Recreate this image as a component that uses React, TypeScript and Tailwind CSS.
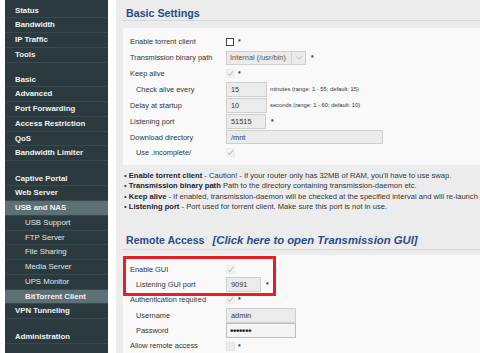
import React from "react";

type Item = { t: string; sub?: boolean; active?: boolean; spacer?: number };

const items: Item[] = [
  { t: "Status" },
  { t: "Bandwidth" },
  { t: "IP Traffic" },
  { t: "Tools" },
  { t: "", spacer: 10 },
  { t: "Basic" },
  { t: "Advanced" },
  { t: "Port Forwarding" },
  { t: "Access Restriction" },
  { t: "QoS" },
  { t: "Bandwidth Limiter" },
  { t: "", spacer: 10.5 },
  { t: "Captive Portal" },
  { t: "Web Server" },
  { t: "USB and NAS", active: true },
  { t: "USB Support", sub: true },
  { t: "FTP Server", sub: true },
  { t: "File Sharing", sub: true },
  { t: "Media Server", sub: true },
  { t: "UPS Monitor", sub: true },
  { t: "BitTorrent Client", sub: true, active: true },
  { t: "VPN Tunneling" },
  { t: "", spacer: 10.5 },
  { t: "Administration" },
];

const font = { fontFamily: '"Liberation Sans", Arial, sans-serif' };

function Check({ checked, enabled, empty }: { checked?: boolean; enabled?: boolean; empty?: boolean }) {
  if (enabled) {
    return <div className="w-[8px] h-[8px] border border-[#444] bg-white" />;
  }
  if (empty) {
    return <div className="w-[9px] h-[9px] border border-[#e2e2e2] bg-[#ececec]" />;
  }
  return (
    <svg width="9" height="9" viewBox="0 0 9 9">
      <rect x="0.5" y="0.5" width="8" height="8" fill="#f4f4f4" stroke="#ececec" />
      {checked && <path d="M1.8 4.6 L3.6 6.4 L7.2 2.2" fill="none" stroke="#c4c4c4" strokeWidth="1.2" />}
    </svg>
  );
}

function Star({ ml = "ml-[4px]" }: { ml?: string }) {
  return <span className={`${ml} text-[7px] text-[#333] font-bold leading-none`}>*</span>;
}

function Row({ label, indent, h, children }: { label: string; indent?: boolean; h: string; children?: React.ReactNode }) {
  return (
    <div className={`flex items-center ${h}`}>
      <div className={`${indent ? "pl-[13px]" : "pl-[7px]"} w-[103px] shrink-0 text-[7.4px] text-[#333] whitespace-nowrap`}>{label}</div>
      <div className="flex items-center">{children}</div>
    </div>
  );
}

function Input({ w, v, h = "h-[15px]" }: { w: string; v: string; h?: string }) {
  return (
    <div className={`${w} ${h} border border-[#cfcfcf] bg-[#ebebeb] flex items-center pl-[4px] text-[7.4px] text-[#333]`}>
      {v}
    </div>
  );
}

function Hint({ t }: { t: string }) {
  return <span className="ml-[3px] text-[5.8px] text-[#333] whitespace-nowrap">{t}</span>;
}

export default function App() {
  const h1 = "h-[15.86px]";
  const h2 = "h-[15.4px]";
  return (
    <div className="w-[480px] h-[353px] overflow-hidden bg-white flex" style={font}>
      {/* Sidebar */}
      <div className="ml-[5px] w-[103px] h-full bg-[#2b3a3f] pt-[3.6px] shrink-0">
        {items.map((it, i) =>
          it.spacer ? (
            <div key={i} style={{ height: it.spacer }} />
          ) : (
            <div
              key={i}
              className={`h-[14.75px] flex items-center border-b border-[#3a494e] whitespace-nowrap text-[7.8px] ${
                it.sub ? "pl-[20px]" : "pl-[10px]"
              } ${it.active ? "bg-[#5d7075]" : ""} ${
                it.sub && !it.active ? "font-normal text-[#e2e6e7]" : "font-bold text-[#f2f4f4]"
              }`}
            >
              {it.t}
            </div>
          )
        )}
      </div>

      {/* Main */}
      <div className="ml-[8px] flex-1 h-full bg-[#ececec] pl-[7px] overflow-hidden">
        <div className="pt-[6px] pl-[3px] border-b border-[#d6d6d6] leading-[14px] text-[10.7px] font-bold text-[#2b4a88]">
          Basic Settings
        </div>
        <div className="mt-[7px] bg-[#f9f9f9] pt-[6px] pb-[4px]">
          <Row label="Enable torrent client" h={h1}>
            <Check enabled />
            <Star />
          </Row>
          <Row label="Transmission binary path" h={h1}>
            <div className="w-[80px] h-[14px] border border-[#cfcfcf] bg-[#ebebeb] flex items-center text-[7.4px] text-[#555]">
              <span className="pl-[3px] flex-1">Internal (/usr/bin)</span>
              <span className="w-[14px] h-full border-l border-[#d4d4d4] flex items-center justify-center">
                <svg width="6" height="4" viewBox="0 0 6 4">
                  <path d="M0.5 0.5 L3 3.2 L5.5 0.5" fill="none" stroke="#aaa" strokeWidth="0.8" />
                </svg>
              </span>
            </div>
            <Star ml="ml-[5px]" />
          </Row>
          <Row label="Keep alive" h={h1}>
            <Check checked />
            <Star ml="ml-[3px]" />
          </Row>
          <Row label="Check alive every" indent h={h1}>
            <Input w="w-[41px]" v="15" />
            <Hint t="minutes (range: 1 - 55; default: 15)" />
          </Row>
          <Row label="Delay at startup" h={h1}>
            <Input w="w-[41px]" v="10" />
            <Hint t="seconds (range: 1 - 60; default: 10)" />
          </Row>
          <Row label="Listening port" h={h1}>
            <Input w="w-[40px]" v="51515" />
            <Star ml="ml-[5px]" />
          </Row>
          <Row label="Download directory" h={h1}>
            <Input w="w-[157px]" h="h-[14px]" v="/mnt" />
          </Row>
          <Row label="Use .incomplete/" indent h={h1}>
            <Check checked />
          </Row>
        </div>

        <div className="mt-[6px] pl-[1px] text-[7.6px] leading-[10.4px] text-[#333] whitespace-nowrap">
          <div>
            • <b className="text-[#1c1c2c]">Enable torrent client</b> - Caution! - If your router only has 32MB of RAM, you'll have to use swap.
          </div>
          <div>
            • <b className="text-[#1c1c2c]">Transmission binary path</b> Path to the directory containing transmission-daemon etc.
          </div>
          <div>
            • <b className="text-[#1c1c2c]">Keep alive</b> - If enabled, transmission-daemon will be checked at the specified interval and will re-launch after a crash.
          </div>
          <div>
            • <b className="text-[#1c1c2c]">Listening port</b> - Port used for torrent client. Make sure this port is not in use.
          </div>
        </div>

        <div className="mt-[19px] pl-[3px] pb-[2px] border-b border-[#d6d6d6] leading-[14px] font-bold text-[#2b4a88] whitespace-nowrap">
          <span className="text-[10.6px]">Remote Access</span>
          <span className="ml-[8px] text-[11.3px] italic">[Click here to open Transmission GUI]</span>
        </div>
        <div className="relative mt-[5.6px] bg-[#f9f9f9] pt-[6.3px] pb-[4px]">
          <Row label="Enable GUI" h={h2}>
            <Check checked />
          </Row>
          <Row label="Listening GUI port" indent h={h2}>
            <Input w="w-[35px]" v="9091" />
            <Star ml="ml-[5px]" />
          </Row>
          <Row label="Authentication required" h={h2}>
            <Check checked />
            <Star ml="ml-[3px]" />
          </Row>
          <Row label="Username" indent h={h2}>
            <Input w="w-[70px]" v="admin" />
          </Row>
          <Row label="Password" indent h={h2}>
            <div className="w-[70px] h-[15px] border border-[#bdbdbd] bg-[#f4f4f4] flex items-center pl-[3px] text-[9.5px] font-bold text-[#222] tracking-[-0.3px]">
              •••••••
            </div>
          </Row>
          <Row label="Allow remote access" h={h2}>
            <Check empty />
            <Star ml="ml-[3px]" />
          </Row>
          <div className="absolute left-0 top-[1px] w-[153px] h-[40px] border-[3px] border-[#e61e28]" />
        </div>
      </div>
    </div>
  );
}
